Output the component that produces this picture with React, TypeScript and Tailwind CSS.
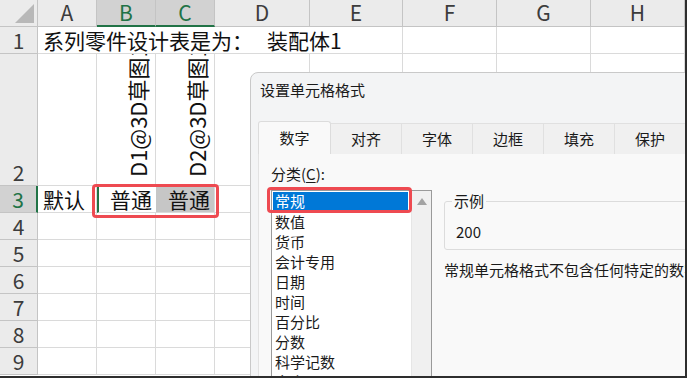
import React from 'react';

const cols = ['A', 'B', 'C', 'D', 'E', 'F', 'G', 'H'];
const widths = [59, 59, 59, 95, 93, 94, 94, 94];
const categories = ['数值', '货币', '会计专用', '日期', '时间', '百分比', '分数', '科学记数', '文本'];
const tabs = ['数字', '对齐', '字体', '边框', '填充', '保护'];

function HeaderCell({ label, selected }: { label: string; selected?: boolean }) {
  return (
    <div
      className={
        selected
          ? 'flex items-center justify-center h-[27px] bg-[#d2d2d2] text-[#217346] border-r border-[#c4c4c4] border-b-2 border-b-[#217346]'
          : 'flex items-center justify-center h-[27px] bg-[#ebebeb] text-[#3c3c3c] border-r border-b border-[#c4c4c4]'
      }
    >
      {label}
    </div>
  );
}

function RowHead({ n, h, selected }: { n: number; h: string; selected?: boolean }) {
  return (
    <div
      className={
        selected
          ? `${h} flex items-end justify-center leading-[25px] bg-[#d2d2d2] text-[#217346] border-b border-[#c4c4c4] border-r-2 border-r-[#217346]`
          : `${h} flex items-end justify-center leading-[25px] bg-[#ebebeb] text-[#3c3c3c] border-b border-r border-[#c4c4c4]`
      }
    >
      {n}
    </div>
  );
}

function Cell({ children, className = '' }: { children?: React.ReactNode; className?: string }) {
  return <div className={`border-r border-b border-[#dadada] ${className}`}>{children}</div>;
}

// text rotated to read bottom-to-top, clipped by the cell at the top
function VerticalText({ text }: { text: string }) {
  return (
    <div className="h-full flex justify-end overflow-hidden">
      <div className="w-[22px] h-full mr-[7px]">
        <div className="w-[131px] h-[22px] origin-top-left -rotate-90 translate-y-[131px] pl-[8px] text-[22px] leading-[22px] whitespace-nowrap">
          {text}
        </div>
      </div>
    </div>
  );
}

export default function App() {
  return (
    <div
      className="relative w-[687px] h-[378px] overflow-hidden bg-white border-r-2 border-b-2 border-[#2e2e2e] text-[21px] text-[#111]"
      style={{ fontFamily: '"Noto Sans CJK SC", "Liberation Sans", sans-serif' }}
    >
      {/* sheet */}
      <div className="grid grid-cols-[38px_59px_59px_59px_95px_93px_94px_94px_94px]">
        {/* header row */}
        <div className="h-[27px] bg-[#ebebeb] border-r border-b border-[#c4c4c4] flex items-end justify-end pr-[3px] pb-[3px]">
          <svg width="19" height="19" viewBox="0 0 19 19">
            <polygon points="19,0 19,19 0,19" fill="#b8b8b8" />
          </svg>
        </div>
        {cols.map((c, i) => (
          <HeaderCell key={c} label={c} selected={i === 1 || i === 2} />
        ))}

        {/* row 1 */}
        <RowHead n={1} h="h-[27px]" />
        <div className="col-span-5 h-[27px] border-r border-b border-[#dadada] flex items-end pl-[5px] whitespace-nowrap leading-[25px]">
          系列零件设计表是为：&nbsp;&nbsp;&nbsp;装配体1
        </div>
        <Cell className="h-[27px]" />
        <Cell className="h-[27px]" />
        <Cell className="h-[27px]" />

        {/* row 2 */}
        <RowHead n={2} h="h-[132px]" />
        <Cell className="h-[132px]" />
        <Cell className="h-[132px]">
          <VerticalText text="D1@3D草图1" />
        </Cell>
        <Cell className="h-[132px]">
          <VerticalText text="D2@3D草图1" />
        </Cell>
        {widths.slice(3).map((w, i) => (
          <Cell key={i} className="h-[132px]" />
        ))}

        {/* row 3 */}
        <RowHead n={3} h="h-[27px]" selected />
        <Cell className="h-[27px] flex items-end pl-[5px] leading-[25px]">默认</Cell>
        <div className="h-[27px] border-b border-[#dadada] border-l-2 border-l-[#217346] flex items-end justify-end pr-[4px] leading-[25px]">
          普通
        </div>
        <div className="h-[27px] border-r border-b border-[#dadada] bg-[#c6c6c6] flex items-end justify-end pr-[4px] leading-[25px]">
          普通
        </div>
        {widths.slice(3).map((w, i) => (
          <Cell key={i} className="h-[27px]" />
        ))}

        {[4, 5, 6, 7, 8, 9].map((n) => (
          <React.Fragment key={n}>
            <RowHead n={n} h="h-[27px]" />
            {widths.map((w, i) => (
              <Cell key={i} className="h-[27px]" />
            ))}
          </React.Fragment>
        ))}
      </div>

      {/* red highlight on B3:C3 */}
      <div className="absolute left-[92px] top-[184px] w-[127px] h-[34px] border-[3px] border-[#ee4a51] rounded-[4px]" />

      {/* format cells dialog */}
      <div className="absolute left-[250px] top-[72px] w-[460px] h-[330px] bg-[#f3f4f5] border border-[#c9c9c9] rounded-tl-[8px] text-[15px] text-[#1a1a1a] flex flex-col">
        <div className="h-[37px] pl-[9px] pt-[5px] leading-[24px]">设置单元格格式</div>
        <div className="flex pl-[7px] pt-[11px]">
          {tabs.map((t, i) =>
            i === 0 ? (
              <div
                key={t}
                className="w-[73px] h-[33px] flex items-center justify-center bg-[#f9f9f9] border border-b-0 border-[#dcdcdc] rounded-t-[3px]"
              >
                {t}
              </div>
            ) : (
              <div
                key={t}
                className="w-[71px] h-[31px] mt-[2px] flex items-center justify-center bg-[#f0f0f0] border-r border-t border-[#e0e0e0]"
              >
                {t}
              </div>
            )
          )}
        </div>
        <div className="flex-1 ml-[7px] bg-[#f9f9f9] border-l border-[#e2e2e2] flex pl-[12px] pt-[9px]">
          <div className="flex flex-col">
            <div className="leading-[22px] mb-[5px]">
              分类(<span className="underline underline-offset-2">C</span>):
            </div>
            <div className="relative w-[161px] h-[200px] bg-white border border-[#9a9a9a] flex">
              <div className="flex-1 flex flex-col pt-[1px] pl-[1px]">
                <div className="h-[18px] mr-[3px] bg-[#0078d7] text-white leading-[18px] pl-[2px] mb-[2px]">常规</div>
                {categories.map((c) => (
                  <div key={c} className="h-[20px] leading-[20px] pl-[2px]">
                    {c}
                  </div>
                ))}
              </div>
              <div className="w-[20px] bg-[#f0f0f0] border-l border-[#e6e6e6] flex justify-center pt-[7px]">
                <svg width="10" height="7" viewBox="0 0 10 7">
                  <polygon points="5,0 10,7 0,7" fill="#a3a3a3" />
                </svg>
              </div>
              <div className="absolute -left-[5px] -top-[4px] w-[145px] h-[26px] border-[3px] border-[#ee4a51] rounded-[4px]" />
            </div>
          </div>
          <div className="flex flex-col ml-[12px] pt-[38px]">
            <div className="relative w-[260px] h-[49px] border border-[#dcdcdc] rounded-[3px] pl-[11px] pt-[18px] leading-[24px]">
              <span className="absolute left-[7px] -top-[12px] bg-[#f9f9f9] px-[2px] leading-[22px]">示例</span>
              200
            </div>
            <div className="mt-[9px] whitespace-nowrap leading-[22px]">常规单元格格式不包含任何特定的数字格式。</div>
          </div>
        </div>
      </div>
    </div>
  );
}
